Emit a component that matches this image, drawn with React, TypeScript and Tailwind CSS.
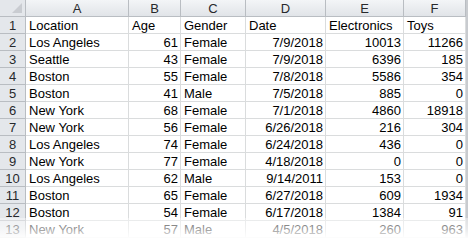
import React from 'react'

const cols = ['A', 'B', 'C', 'D', 'E', 'F']

const rows: (string | number)[][] = [
    ['Location', 'Age', 'Gender', 'Date', 'Electronics', 'Toys'],
    ['Los Angeles', 61, 'Female', '7/9/2018', 10013, 11266],
    ['Seattle', 43, 'Female', '7/9/2018', 6396, 185],
    ['Boston', 55, 'Female', '7/8/2018', 5586, 354],
    ['Boston', 41, 'Male', '7/5/2018', 885, 0],
    ['New York', 68, 'Female', '7/1/2018', 4860, 18918],
    ['New York', 56, 'Female', '6/26/2018', 216, 304],
    ['Los Angeles', 74, 'Female', '6/24/2018', 436, 0],
    ['New York', 77, 'Female', '4/18/2018', 0, 0],
    ['Los Angeles', 62, 'Male', '9/14/2011', 153, 0],
    ['Boston', 65, 'Female', '6/27/2018', 609, 1934],
    ['Boston', 54, 'Female', '6/17/2018', 1384, 91],
    ['New York', 57, 'Male', '4/5/2018', 260, 963],
]

const App = () => {
    return (
        <div className="relative w-[472px] h-[240px] overflow-hidden bg-white" style={{fontFamily: '"Liberation Sans", Arial, sans-serif'}}>
            <div className="w-[468px] border-r-2 border-[#c8cbcf]">
                <div className="grid grid-cols-[26px_103px_52px_65px_80px_78px_62px] text-[13px] leading-none">
                    {/* corner */}
                    <div className="relative h-[17px] bg-[#e4e7eb] border-r border-b border-[#b9bdc2]">
                        <svg className="absolute right-[3px] bottom-[3px]" width="10" height="10" viewBox="0 0 10 10">
                            <polygon points="10,0 10,10 0,10" fill="#c9ccd1" />
                        </svg>
                    </div>
                    {cols.map(c => (
                        <div key={c} className="h-[17px] flex items-center justify-center bg-gradient-to-b from-[#f3f5f7] to-[#e1e4e8] border-r border-b border-[#b9bdc2] text-[#27292c]">
                            {c}
                        </div>
                    ))}
                    {rows.map((r, i) => (
                        <React.Fragment key={i}>
                            <div className="h-[17px] flex items-center justify-center bg-[#e4e7eb] border-r border-b border-[#b9bdc2] text-[#27292c]">
                                {i + 1}
                            </div>
                            {r.map((v, j) => (
                                <div
                                    key={j}
                                    className={
                                        typeof v === 'number' || (i > 0 && j === 3)
                                            ? 'h-[17px] flex items-center justify-end pr-[2px] border-r border-b border-[#dadcdd] text-black'
                                            : 'h-[17px] flex items-center pl-[3px] border-r border-b border-[#dadcdd] text-black'
                                    }
                                >
                                    {v}
                                </div>
                            ))}
                        </React.Fragment>
                    ))}
                </div>
            </div>
            <div className="absolute inset-x-0 bottom-0 h-[22px] bg-gradient-to-b from-white/40 via-white/60 to-white" />
        </div>
    )
}

export default App
